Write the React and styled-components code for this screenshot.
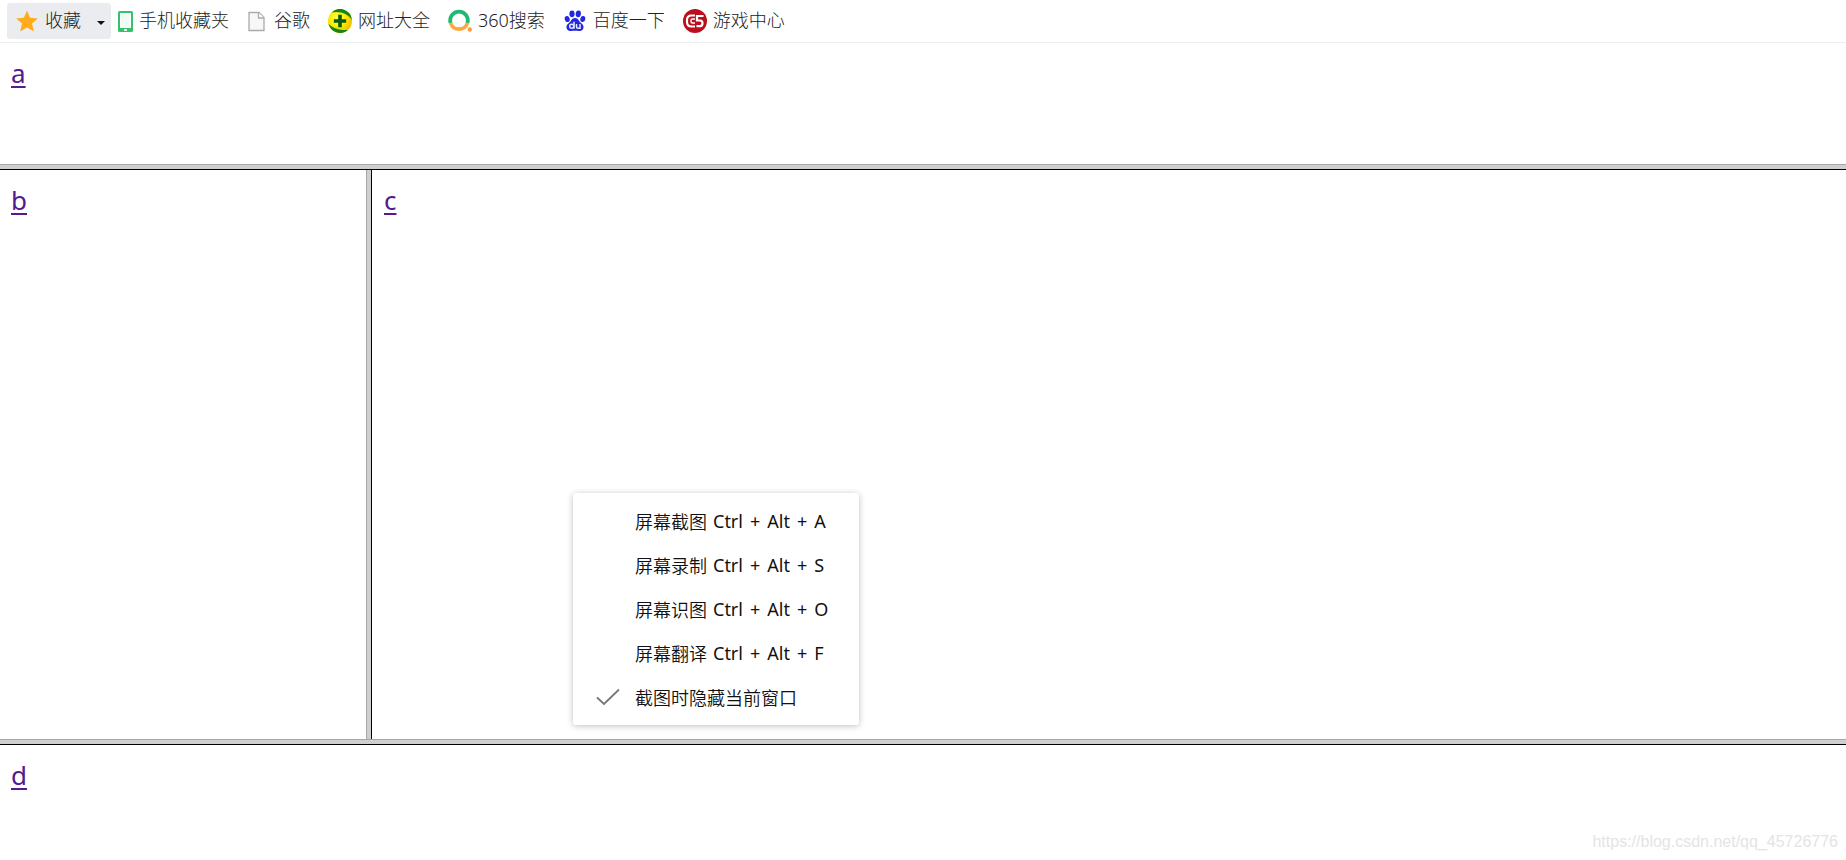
import React from 'react'
import styled, { createGlobalStyle } from 'styled-components'

const bookmarks = [
  { name: '手机收藏夹', Icon: PhoneIcon },
  { name: '谷歌', Icon: PageIcon },
  { name: '网址大全', Icon: PlusBallIcon },
  { name: '360搜索', Icon: RingIcon },
  { name: '百度一下', Icon: PawIcon },
  { name: '游戏中心', Icon: GameIcon },
]

const shortcuts = [
  { name: '屏幕截图', letter: 'A' },
  { name: '屏幕录制', letter: 'S' },
  { name: '屏幕识图', letter: 'O' },
  { name: '屏幕翻译', letter: 'F' },
]

function StarIcon() {
  return (
    <svg width="22" height="22" viewBox="0 0 22 22" aria-hidden="true">
      <path d="M11 .5l3.100 7.200 7.700.7-5.800 5.200 1.800 7.900-6.800-4.100-6.800 4.100 1.800-7.900-5.800-5.200 7.700-.7z" fill="#ffab1a" />
    </svg>
  )
}

function PhoneIcon() {
  return (
    <svg width="16" height="22" viewBox="0 0 16 22" aria-hidden="true">
      <rect x="1" y="1" width="15" height="21" rx="1.500" fill="#35c26b" />
      <rect x="3" y="3" width="11" height="15" fill="#fff" />
      <rect x="4" y="4" width="9" height="13" fill="#effbf3" />
      <rect x="7" y="19" width="3" height="2" rx=".8" fill="#fff" />
    </svg>
  )
}

function PageIcon() {
  return (
    <svg width="21" height="24" viewBox="0 0 21 24" aria-hidden="true">
      <path d="M2 3.500h10l5 5v13H2z" fill="#f7f7f7" stroke="#aaa" strokeWidth="1.300" />
      <path d="M11.500 3.500v5.500H17" fill="#fff" stroke="#aaa" strokeWidth="1.300" />
    </svg>
  )
}

function PlusBallIcon() {
  return (
    <svg width="24" height="24" viewBox="0 0 24 24" aria-hidden="true">
      <defs>
        <radialGradient id="ball" cx=".4" cy=".4" r=".65">
          <stop offset="0" stopColor="#ffff5a" />
          <stop offset=".5" stopColor="#fdee00" />
          <stop offset="1" stopColor="#f0b800" />
        </radialGradient>
      </defs>
      <circle cx="12" cy="12" r="12" fill="url(#ball)" />
      <path d="M3.500 3.500A12 12 0 0 1 23.900 11C21 5.500 12 1.500 3.500 3.500z" fill="#11861a" />
      <path d="M.4 14.500A12 12 0 0 0 20 21C13 21.500 5 20 .4 14.500z" fill="#11861a" />
      <path d="M10.200 5.800h3.600v4.400h4.400v3.600h-4.400v4.400h-3.600v-4.400H5.800v-3.600h4.400z" fill="#0b5a12" />
    </svg>
  )
}

function RingIcon() {
  return (
    <svg width="24" height="24" viewBox="0 0 24 24" aria-hidden="true">
      <path d="M2.600 14a8.800 8.800 0 1 1 16.800 0" fill="none" stroke="#1dbb73" strokeWidth="3.800" />
      <path d="M2.600 14a8.800 8.800 0 0 0 16.800 0" fill="none" stroke="#ffa640" strokeWidth="3.800" />
      <circle cx="21.800" cy="20.500" r="2.200" fill="#ff9d3a" />
    </svg>
  )
}

function PawIcon() {
  return (
    <svg width="24" height="24" viewBox="0 0 24 24" aria-hidden="true">
      <g fill="#2128e0">
        <ellipse cx="4.200" cy="10" rx="2.500" ry="3.100" transform="rotate(-12 4.200 10)" />
        <ellipse cx="9" cy="4.800" rx="2.600" ry="3.400" />
        <ellipse cx="15.300" cy="4.800" rx="2.600" ry="3.400" transform="rotate(8 15.300 4.800)" />
        <ellipse cx="19.800" cy="10" rx="2.500" ry="3.100" transform="rotate(8 19.800 10)" />
        <path d="M12 9c-3.200 0-3.800 3.200-6 5-2.400 1.700-3 3.500-2.300 5.500 1.300 3.600 5.300 2.300 8.300 2.300s7 1.300 8.300-2.300c.7-2 .1-3.800-2.300-5.500-2.200-1.800-2.800-5-6-5z" />
      </g>
      <g fill="none" stroke="#e6e8ff" strokeWidth="1.500">
        <circle cx="8.700" cy="17.200" r="2" />
        <path d="M11 12.800v7M13.500 15v2.800q0 1.500 1.500 1.500h2V15" />
      </g>
    </svg>
  )
}

function GameIcon() {
  return (
    <svg width="24" height="24" viewBox="0 0 24 24" aria-hidden="true">
      <circle cx="12" cy="12" r="12" fill="#bb101c" />
      <g fill="none" stroke="#fff">
        <path d="M12 6.500H8.500Q4 6.500 4 11v2q0 4.500 4.500 4.500H12" strokeWidth="2.200" />
        <path d="M12 10H9.500Q8 10 8 11.500v1Q8 14 9.500 14H12" strokeWidth="1.400" />
        <path d="M20.500 7H14v4.500h3q2.500 0 2.500 2.800t-2.500 2.900h-3.500" strokeWidth="2.200" />
      </g>
    </svg>
  )
}

function CheckIcon() {
  return (
    <svg width="24" height="18" viewBox="0 0 24 18" aria-hidden="true">
      <path d="M1 9.500l7 6.500L23 1.500" fill="none" stroke="#777" strokeWidth="1.800" />
    </svg>
  )
}

const App = () => {
  return (
    <Page>
      <GlobalStyle />
      <Toolbar>
        <Favorites type="button">
          <StarIcon />
          <Label>收藏</Label>
          <Caret />
        </Favorites>
        <BookmarkList>
          {bookmarks.map(({ name, Icon }) => (
            <li key={name}>
              <Bookmark href="#">
                <Icon />
                <Label>{name}</Label>
              </Bookmark>
            </li>
          ))}
        </BookmarkList>
      </Toolbar>
      <Rows>
        <Frame><FrameLink href="#a">a</FrameLink></Frame>
        <RowDivider />
        <Columns>
          <Frame><FrameLink href="#b">b</FrameLink></Frame>
          <ColumnDivider />
          <Frame $inset="12px"><FrameLink href="#c">c</FrameLink></Frame>
        </Columns>
        <RowDivider />
        <Frame><FrameLink href="#d">d</FrameLink></Frame>
      </Rows>
      <Menu role="menu">
        {shortcuts.map(({ name, letter }) => (
          <MenuItem key={letter} type="button" role="menuitem">
            <CheckSlot />
            <span>{name}</span>
            <Keys>
              <span>Ctrl</span>
              <span>+</span>
              <span>Alt</span>
              <span>+</span>
              <span>{letter}</span>
            </Keys>
          </MenuItem>
        ))}
        <MenuItem type="button" role="menuitemcheckbox" aria-checked="true">
          <CheckSlot><CheckIcon /></CheckSlot>
          <span>截图时隐藏当前窗口</span>
        </MenuItem>
      </Menu>
      <Watermark>https://blog.csdn.net/qq_45726776</Watermark>
    </Page>
  )
}

const GlobalStyle = createGlobalStyle`
* {
    box-sizing: border-box;
}
body {
    margin: 0;
    background: #fff;
    font-family: "Noto Sans", "Noto Sans CJK SC", sans-serif;
}
`
const Page = styled.div`
display: flex;
flex-direction: column;
height: 100vh;
position: relative;
overflow: hidden;
`
const Toolbar = styled.nav`
display: flex;
align-items: center;
flex-shrink: 0;
padding: 3px 7px;
border-bottom: 1px solid #eee;
font-size: 18px;
font-weight: 300;
color: #222;
white-space: nowrap;
`
const Label = styled.span`
line-height: 24px;
padding-bottom: 2px;
`
const Favorites = styled.button`
display: flex;
align-items: center;
gap: 7px;
height: 36px;
padding: 0 6px 0 9px;
border: 0;
border-radius: 3px;
background: #ebecf0;
color: inherit;
font: inherit;
`
const Caret = styled.i`
margin-left: 9px;
margin-top: 3px;
border: 4px solid transparent;
border-top-color: #111;
border-bottom: 0;
`
const BookmarkList = styled.ul`
display: flex;
gap: 18px;
margin: 0;
padding: 0 0 0 6px;
list-style: none;
`
const Bookmark = styled.a`
display: flex;
align-items: center;
gap: 6px;
height: 36px;
color: inherit;
text-decoration: none;
`
const Rows = styled.main`
display: grid;
grid-template-rows: 121fr 6px 569fr 6px 115fr;
flex: 1;
min-height: 0;
`
const Columns = styled.div`
display: grid;
grid-template-columns: 366fr 6px 1474fr;
min-height: 0;
`
const Frame = styled.section`
padding: 12px ${(props) => props.$inset || '11px'};
min-width: 0;
min-height: 0;
overflow: hidden;
`
const FrameLink = styled.a`
color: #551a8b;
font-size: 26px;
line-height: 36px;
text-decoration-thickness: 2px;
text-underline-offset: 3px;
`
const RowDivider = styled.div`
background: #cfcfcf;
border-top: 1px solid #a7a7a7;
border-bottom: 1px solid #000;
`
const ColumnDivider = styled.div`
background: #cfcfcf;
border-left: 1px solid #a7a7a7;
border-right: 1px solid #000;
`
// floats over the frames
const Menu = styled.div`
position: absolute;
left: 573px;
top: 493px;
width: 286px;
padding: 6px 0;
border-radius: 3px;
background: #fff;
box-shadow: 0 1px 6px rgba(0,0,0,0.25);
`
const MenuItem = styled.button`
display: flex;
align-items: center;
width: 100%;
height: 44px;
padding: 0;
border: 0;
background: none;
color: #111;
font-family: inherit;
font-size: 18px;
font-weight: 350;
text-align: left;
white-space: nowrap;
`
const CheckSlot = styled.span`
display: flex;
justify-content: flex-end;
flex-shrink: 0;
width: 62px;
padding-right: 15px;
`
const Keys = styled.span`
display: flex;
gap: 7px;
padding-left: 6px;
font-weight: 400;
`
const Watermark = styled.div`
position: absolute;
right: 8px;
bottom: 8px;
color: #e4e4e4;
font-family: "Liberation Sans", Arial, sans-serif;
font-size: 16px;
line-height: 20px;
`

export default App
